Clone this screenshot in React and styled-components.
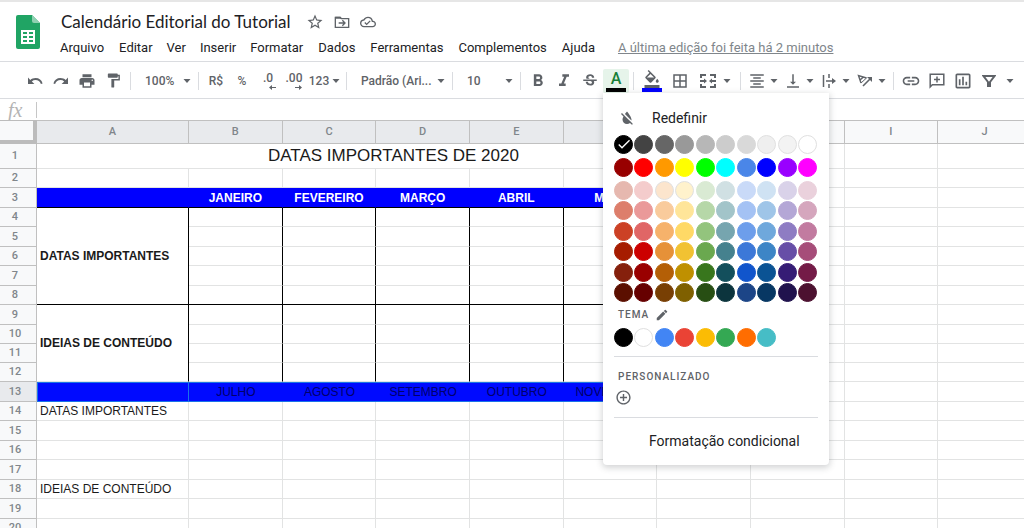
import React from 'react';
import styled, { createGlobalStyle } from 'styled-components';
import {
  MdPrint, MdFormatPaint, MdFormatBold, MdFormatItalic, MdStrikethroughS,
  MdFormatColorFill, MdBorderAll, MdFormatAlignCenter, MdVerticalAlignBottom, MdLink,
  MdOutlineInsertChart, MdFormatColorReset, MdEdit, MdAddCircleOutline,
  MdStarBorder, MdCheck,
} from 'react-icons/md';

const GlobalStyle = createGlobalStyle`
  * { box-sizing: border-box; }
  body {
    margin: 0;
    background: #fff;
    color: #3c4043;
    font-family: Roboto, "Liberation Sans", sans-serif;
  }
  button, select, input { font: inherit; color: inherit; }
`;

const Page = styled.div`
  height: 100vh;
  display: flex;
  flex-direction: column;
  overflow: hidden;
  border-top: 2px solid #e6e6e6;
`;

const Header = styled.header`
  display: flex;
  gap: 20px;
  height: 60px;
  padding: 8px 0 0 16px;
  border-bottom: 1px solid #dadce0;
`;

const Logo = styled.svg`
  width: 24px;
  height: 34px;
  margin-top: 5px;
  flex: none;
`;

const HeaderText = styled.div`
  flex: 1;
  min-width: 0;
`;

const TitleRow = styled.div`
  display: flex;
  align-items: center;
  gap: 10px;
  height: 24px;
  color: #5f6368;
`;

const DocTitle = styled.h1`
  margin: 0 5px 0 1px;
  font: 400 17px/24px Lato, sans-serif;
  color: #202124;
  white-space: nowrap;
`;

const IconButton = styled.button`
  display: flex;
  align-items: center;
  justify-content: center;
  padding: 0;
  border: 0;
  background: none;
  color: #5f6368;
  cursor: pointer;
  svg { display: block; }
`;

const Menu = styled.nav`
  display: flex;
  align-items: center;
  gap: 14px;
  height: 28px;
`;

const MenuItem = styled.button`
  padding: 0;
  border: 0;
  background: none;
  font-size: 13px;
  line-height: 20px;
  color: #202124;
  white-space: nowrap;
  cursor: pointer;
  &:first-child { margin-right: 1px; }
  &:nth-child(n + 5) { margin-right: 1px; }
`;

const LastEdit = styled.a`
  margin-left: 8px;
  font-size: 13px;
  line-height: 20px;
  color: #80868b;
  text-decoration: underline;
  white-space: nowrap;
`;

const Toolbar = styled.div`
  position: relative;
  z-index: 2;
  display: flex;
  align-items: center;
  height: 37px;
  padding: 1px 0 0 22px;
  border-bottom: 1px solid #dadce0;
  color: #5f6368;
  font-size: 12px;
`;

const Tool = styled.button`
  display: flex;
  align-items: center;
  flex: none;
  width: ${(p) => p.$width || 26}px;
  height: 24px;
  padding: 0;
  border: 0;
  border-radius: 2px;
  background: ${(p) => (p.$active ? '#e6f4ea' : 'none')};
  color: ${(p) => (p.$active ? '#188038' : '#5f6368')};
  font-weight: 500;
  cursor: pointer;
`;

const Face = styled.span`
  display: flex;
  flex-direction: column;
  align-items: center;
  justify-content: center;
  width: ${(p) => p.$width || 26}px;
  svg { display: block; }
`;

const ColorBar = styled.span`
  width: 20px;
  height: 4px;
  background: ${(p) => p.$color};
`;

const LetterA = styled.span`
  font-size: 16px;
  font-weight: 500;
  line-height: 18px;
`;

const Separator = styled.span`
  flex: none;
  width: 1px;
  height: 18px;
  margin: 0 4px;
  background: #dadce0;
`;

const CaretIcon = styled.svg`
  display: block;
  flex: none;
  width: 8px;
  height: 4px;
  margin: 0 1px;
  fill: #5f6368;
  pointer-events: none;
`;

const SelectBox = styled.label`
  display: flex;
  align-items: center;
  flex: none;
  width: ${(p) => p.$width}px;
  padding: 0 2px 0 10px;
`;

const Select = styled.select`
  flex: 1;
  min-width: 0;
  padding: 0;
  border: 0;
  appearance: none;
  background: none;
  outline: none;
  font-weight: 500;
`;

const Anchor = styled.div`
  position: relative;
`;

const Popup = styled.div`
  position: absolute;
  top: 100%;
  left: 0;
  width: 226px;
  padding: 13px 11px 12px;
  border-radius: 0 0 4px 4px;
  background: #fff;
  box-shadow: 0 2px 6px 1px rgba(60, 64, 67, 0.22);
`;

const PopupAction = styled.button`
  display: flex;
  align-items: center;
  gap: 16px;
  width: 100%;
  height: 24px;
  padding: 0 0 0 ${(p) => (p.$indent ? 35 : 4)}px;
  border: 0;
  background: none;
  font-size: 14px;
  color: #202124;
  text-align: left;
  cursor: pointer;
  svg { color: #5f6368; }
`;

const Swatches = styled.div`
  display: grid;
  grid-template-columns: repeat(10, 19px);
  justify-content: space-between;
  align-content: space-between;
  height: ${(p) => p.$height || 19}px;
  margin: ${(p) => p.$top}px 1px 0 0;
`;

const Swatch = styled.button`
  display: flex;
  align-items: center;
  justify-content: center;
  width: 19px;
  height: 19px;
  padding: 0;
  border: 1px solid ${(p) => (p.$outlined ? '#e0e0e0' : p.$color)};
  border-radius: 50%;
  background: ${(p) => p.$color};
  color: #fff;
  cursor: pointer;
`;

const PopupLabel = styled.div`
  display: flex;
  align-items: center;
  gap: 6px;
  height: 24px;
  padding-left: 4px;
  font-size: 10px;
  font-weight: 500;
  letter-spacing: 1px;
  color: #5f6368;
`;

const AddColor = styled(IconButton)`
  height: 18px;
  padding-left: 1px;
`;

const Rule = styled.hr`
  height: 1px;
  margin: ${(p) => p.$top}px 0 ${(p) => p.$bottom}px;
  border: 0;
  background: #dadce0;
`;

const FormulaBar = styled.label`
  display: flex;
  align-items: center;
  flex: none;
  height: 21px;
`;

const Fx = styled.span`
  width: 37px;
  padding-left: 8px;
  border-right: 1px solid #c6c6c6;
  font: italic 20px/16px "Liberation Serif", serif;
  color: #b4b4b4;
`;

const FormulaInput = styled.input`
  flex: 1;
  height: 20px;
  border: 0;
  outline: none;
`;

const Sheet = styled.main`
  flex: 1;
  min-height: 0;
  overflow: hidden;
`;

// a little wider than the window, the last column runs off the edge
const Table = styled.table`
  width: calc(100% + 8px);
  table-layout: fixed;
  border-collapse: separate;
  border-spacing: 0;
  font: 12px/14px "Liberation Sans", Arial, sans-serif;
  color: #1a1a1a;
`;

const Col = styled.col`
  width: ${(p) => p.$width}px;
`;

const Row = styled.tr`
  height: ${(p) => p.$height}px;
`;

const Corner = styled.td`
  padding: 0;
  border: solid #bcbcbc;
  border-width: 1px 4px 4px 0;
  background: #f8f9fa;
`;

const HeadCell = styled.th`
  padding: 0;
  border: solid #c0c0c0;
  border-width: ${(p) => (p.$column ? '1px 1px 1px 0' : '0 1px 1px 0')};
  background: ${(p) => (p.$selected ? '#e8eaed' : '#f8f9fa')};
  color: #80868b;
  font: 500 11px/14px Roboto, sans-serif;
  padding-right: ${(p) => (p.$column ? 0 : 6)}px;
`;

const Cell = styled.td`
  padding: 0 3px;
  border: solid #e2e3e3;
  border-width: 0 1px 1px 0;
  border-right-color: ${(p) => (p.$framed ? '#000' : '#e2e3e3')};
  border-bottom-color: ${(p) => (p.$closing ? '#000' : '#e2e3e3')};
  font-weight: ${(p) => (p.$bold ? 700 : 400)};
  white-space: nowrap;
  overflow: hidden;
`;

const TitleCell = styled(Cell)`
  font-size: 17px;
  line-height: 20px;
  text-align: center;
`;

const MonthCell = styled(Cell)`
  border-color: #00f;
  border-bottom-color: #000;
  background: #00f;
  color: #fff;
  font-weight: 700;
  text-align: center;
`;

const SelectedCell = styled(Cell)`
  border-color: #1a73e8;
  border-width: 1px ${(p) => (p.$current ? 1 : 0)}px 1px ${(p) => (p.$current ? 1 : 0)}px;
  background: #000aff;
  color: #00006a;
  text-align: center;
`;

const grays = ['#000000', '#434343', '#666666', '#999999', '#b7b7b7', '#cccccc', '#d9d9d9', '#efefef', '#f3f3f3', '#ffffff'];
const brights = ['#980000', '#ff0000', '#ff9900', '#ffff00', '#00ff00', '#00ffff', '#4a86e8', '#0000ff', '#9900ff', '#ff00ff'];
const shades = [
  '#e6b8af', '#f4cccc', '#fce5cd', '#fff2cc', '#d9ead3', '#d0e0e3', '#c9daf8', '#cfe2f3', '#d9d2e9', '#ead1dc',
  '#dd7e6b', '#ea9999', '#f9cb9c', '#ffe599', '#b6d7a8', '#a2c4c9', '#a4c2f4', '#9fc5e8', '#b4a7d6', '#d5a6bd',
  '#cc4125', '#e06666', '#f6b26b', '#ffd966', '#93c47d', '#76a5af', '#6d9eeb', '#6fa8dc', '#8e7cc3', '#c27ba0',
  '#a61c00', '#cc0000', '#e69138', '#f1c232', '#6aa84f', '#45818e', '#3c78d8', '#3d85c6', '#674ea7', '#a64d79',
  '#85200c', '#990000', '#b45f06', '#bf9000', '#38761d', '#134f5c', '#1155cc', '#0b5394', '#351c75', '#741b47',
  '#5b0f00', '#660000', '#783f04', '#7f6000', '#274e13', '#0c343d', '#1c4587', '#073763', '#20124d', '#4c1130',
];
const theme = ['#000000', '#ffffff', '#4285f4', '#ea4335', '#fbbc04', '#34a853', '#ff6d01', '#46bdc6'];
const outlined = ['#efefef', '#f3f3f3', '#ffffff', '#fce5cd', '#fff2cc'];

const menus = ['Arquivo', 'Editar', 'Ver', 'Inserir', 'Formatar', 'Dados', 'Ferramentas', 'Complementos', 'Ajuda'];
const columns = ['A', 'B', 'C', 'D', 'E', 'F', 'G', 'H', 'I', 'J'];
const firstHalf = ['', 'JANEIRO', 'FEVEREIRO', 'MARÇO', 'ABRIL', 'MAIO', 'JUNHO'];
const secondHalf = ['', 'JULHO', 'AGOSTO', 'SETEMBRO', 'OUTUBRO', 'NOVEMBRO', 'DEZEMBRO'];
const rows = Array.from({ length: 20 }, (_, i) => i + 1);

const Caret = () => (
  <CaretIcon viewBox="0 0 8 4" aria-hidden="true"><path d="M.5 0h7L4 4z" /></CaretIcon>
);

const Palette = ({ colors, height, top, checked }) => (
  <Swatches $height={height} $top={top}>
    {colors.map((c) => (
      <Swatch key={c} $color={c} $outlined={outlined.includes(c)} aria-label={c}>
        {c === checked && <MdCheck size={16} />}
      </Swatch>
    ))}
  </Swatches>
);

const SheetsLogo = () => (
  <Logo viewBox="0 0 24 34" aria-hidden="true">
    <path d="M2 0h14l8 8v24a2 2 0 0 1-2 2H2a2 2 0 0 1-2-2V2a2 2 0 0 1 2-2z" fill="#20a464" />
    <path d="M16 0l8 8h-6a2 2 0 0 1-2-2z" fill="#8ed1b1" />
    <path d="M5 15h14v14H5zM7 17v2h4v-2zM13 17v2h4v-2zM7 21v2h4v-2zM13 21v2h4v-2zM7 25v2h4v-2zM13 25v2h4v-2z" fill="#fff" fillRule="evenodd" />
  </Logo>
);

const UndoIcon = ({ flip }) => (
  <svg width="16" height="8" viewBox="0 0 16 8" fill="currentColor" aria-hidden="true">
    <path
      d="M8.500 1C6.500 1 4.700 1.700 3.300 2.900L1 .6V7h6.400L4.800 4.400A5.600 5.600 0 0 1 8.500 3c2.500 0 4.600 1.600 5.400 3.900l1.700-.5A7.500 7.500 0 0 0 8.500 1z"
      transform={flip ? 'translate(16 0) scale(-1 1)' : undefined}
    />
  </svg>
);

const MoveIcon = () => (
  <svg width="16" height="16" viewBox="0 0 24 24" fill="none" stroke="currentColor" strokeWidth="2" aria-hidden="true">
    <path d="M2 5h7l2 2h11v13H2z" />
    <path d="M2 4h8l2 3H2z" fill="currentColor" stroke="none" />
    <path d="M7 13.500h9M12.500 9.500l4 4-4 4" />
  </svg>
);

const CloudIcon = () => (
  <svg width="16" height="16" viewBox="0 0 24 24" fill="currentColor" aria-hidden="true">
    <path d="M19.350 10.040A7.490 7.490 0 0 0 12 4C9.110 4 6.600 5.640 5.350 8.040A5.994 5.994 0 0 0 0 14c0 3.310 2.690 6 6 6h13c2.760 0 5-2.240 5-5 0-2.640-2.050-4.780-4.650-4.960zM19 18H6c-2.210 0-4-1.790-4-4 0-2.050 1.530-3.760 3.560-3.970l1.070-.110.500-.950A5.469 5.469 0 0 1 12 6c2.620 0 4.880 1.860 5.390 4.430l.300 1.500 1.530.110A2.980 2.980 0 0 1 22 15c0 1.650-1.350 3-3 3zm-9-3.820l-2.090-2.090L6.500 13.500 10 17l6.010-6.010-1.410-1.410z" />
  </svg>
);

const Decimals = ({ text, increase }) => (
  <Face>
    <span>{text}</span>
    <svg width="16" height="5" viewBox="0 0 16 5" fill="#5f6368" aria-hidden="true">
      {increase ? <path d="M9 2h4V0l3 2.500L13 5V3H9z" /> : <path d="M16 2h-4V0L9 2.500 12 5V3h4z" />}
    </svg>
  </Face>
);

const MergeIcon = () => (
  <svg width="16" height="14" viewBox="0 0 16 14" fill="none" stroke="currentColor" strokeWidth="2" aria-hidden="true">
    <path d="M1 4V1h5M10 1h5v3M1 10v3h5M10 13h5v-3M0 7h5M16 7h-5" />
    <path d="M4 4.500L7 7 4 9.500zM12 4.500L9 7l3 2.500z" fill="currentColor" stroke="none" />
  </svg>
);

const OverflowIcon = () => (
  <svg width="14" height="14" viewBox="0 0 14 14" fill="none" stroke="currentColor" strokeWidth="1.500" aria-hidden="true">
    <path d="M1.500 1v12M7 0v4M7 10v4M4 7h7" />
    <path d="M10 4l4 3-4 3z" fill="currentColor" stroke="none" />
  </svg>
);

const RotateIcon = () => (
  <svg width="16" height="16" viewBox="0 0 16 16" fill="none" stroke="currentColor" aria-hidden="true">
    <path d="M4 10L1.500 2.500 9.500 5M3 7l3.500-3" strokeWidth="1.400" />
    <path d="M4 10l5.500-5" strokeWidth="1" />
    <path d="M6 13l7-7" strokeWidth="1.600" />
    <path d="M10 4h5v5z" fill="currentColor" stroke="none" />
  </svg>
);

const CommentIcon = () => (
  <svg width="16" height="16" viewBox="0 0 16 16" fill="none" stroke="currentColor" strokeWidth="1.500" aria-hidden="true">
    <path d="M1.200 14V1.200h13.600v10.600H3.300z" />
    <path d="M8 3.500v6M5 6.500h6" />
  </svg>
);

const FilterIcon = () => (
  <svg width="14" height="12" viewBox="0 0 14 12" fill="none" stroke="currentColor" strokeWidth="2" aria-hidden="true">
    <path d="M1.500 1h11L8 7v5H6V7z" />
  </svg>
);

const ColorMenu = () => (
  <Popup>
    <PopupAction><MdFormatColorReset size={18} />Redefinir</PopupAction>
    <Palette colors={grays} top={5} checked="#000000" />
    <Palette colors={brights} top={4} />
    <Palette colors={shades} height={122} top={4} />
    <PopupLabel>TEMA <MdEdit size={14} /></PopupLabel>
    <Palette colors={theme} top={1} />
    <Rule $top={9} $bottom={8} />
    <PopupLabel>PERSONALIZADO</PopupLabel>
    <AddColor aria-label="Adicionar cor"><MdAddCircleOutline size={17} /></AddColor>
    <Rule $top={10} $bottom={11} />
    <PopupAction $indent>Formatação condicional</PopupAction>
  </Popup>
);

const EditorToolbar = () => (
  <Toolbar>
    <Tool aria-label="Desfazer"><Face><UndoIcon /></Face></Tool>
    <Tool aria-label="Refazer"><Face><UndoIcon flip /></Face></Tool>
    <Tool aria-label="Imprimir"><Face><MdPrint size={18} /></Face></Tool>
    <Tool aria-label="Pintar formatação"><Face><MdFormatPaint size={17} /></Face></Tool>
    <Separator />
    <SelectBox $width={59}>
      <Select aria-label="Zoom"><option>100%</option></Select>
      <Caret />
    </SelectBox>
    <Separator />
    <Tool><Face>R$</Face></Tool>
    <Tool><Face>%</Face></Tool>
    <Tool><Decimals text=".0" /></Tool>
    <Tool><Decimals text=".00" increase /></Tool>
    <Tool $width={35}><Face $width={24}>123</Face><Caret /></Tool>
    <Separator />
    <SelectBox $width={97}>
      <Select aria-label="Fonte"><option>Padrão (Ari...</option></Select>
      <Caret />
    </SelectBox>
    <Separator />
    <SelectBox $width={59}>
      <Select aria-label="Tamanho da fonte"><option>10</option></Select>
      <Caret />
    </SelectBox>
    <Separator />
    <Tool aria-label="Negrito"><Face><MdFormatBold size={20} /></Face></Tool>
    <Tool aria-label="Itálico"><Face><MdFormatItalic size={20} /></Face></Tool>
    <Tool aria-label="Tachado"><Face><MdStrikethroughS size={18} /></Face></Tool>
    <Anchor>
      <Tool $active aria-label="Cor do texto">
        <Face><LetterA>A</LetterA><ColorBar $color="#000" /></Face>
      </Tool>
      <ColorMenu />
    </Anchor>
    <Separator />
    <Tool $width={28} aria-label="Cor de preenchimento">
      <Face $width={28}><MdFormatColorFill size={18} /><ColorBar $color="#00f" /></Face>
    </Tool>
    <Tool $width={28} aria-label="Bordas"><Face $width={28}><MdBorderAll size={18} /></Face></Tool>
    <Tool $width={42} aria-label="Mesclar células"><Face $width={28}><MergeIcon /></Face><Caret /></Tool>
    <Separator />
    <Tool $width={36} aria-label="Alinhamento horizontal"><Face $width={24}><MdFormatAlignCenter size={18} /></Face><Caret /></Tool>
    <Tool $width={36} aria-label="Alinhamento vertical"><Face $width={24}><MdVerticalAlignBottom size={18} /></Face><Caret /></Tool>
    <Tool $width={36} aria-label="Ajuste de texto"><Face $width={24}><OverflowIcon /></Face><Caret /></Tool>
    <Tool $width={36} aria-label="Rotação de texto"><Face $width={24}><RotateIcon /></Face><Caret /></Tool>
    <Separator />
    <Tool aria-label="Inserir link"><Face><MdLink size={20} /></Face></Tool>
    <Tool aria-label="Inserir comentário"><Face><CommentIcon /></Face></Tool>
    <Tool aria-label="Inserir gráfico"><Face><MdOutlineInsertChart size={20} /></Face></Tool>
    <Tool $width={44} aria-label="Filtro"><Face><FilterIcon /></Face><Face $width={16}><Caret /></Face></Tool>
  </Toolbar>
);

const rowHeight = (n) => {
  if (n === 1) return 25;
  return n % 2 && n !== 11 ? 20 : 19;
};

const RowCells = ({ n }) => {
  if (n === 1) {
    return (
      <>
        <TitleCell colSpan={7}>DATAS IMPORTANTES DE 2020</TitleCell>
        {columns.slice(7).map((c) => <Cell key={c} />)}
      </>
    );
  }
  if (n === 3 || n === 13) {
    const names = n === 3 ? firstHalf : secondHalf;
    return (
      <>
        {names.map((name, i) => (
          n === 3
            ? <MonthCell key={columns[i]}>{name}</MonthCell>
            : <SelectedCell key={columns[i]} $current={i === 0}>{name}</SelectedCell>
        ))}
        {columns.slice(7).map((c) => <Cell key={c} />)}
      </>
    );
  }
  const framed = n > 3 && n < 13;
  return columns.map((c, i) => {
    if (i === 0 && n === 4) return <Cell key={c} rowSpan={5} $bold $framed $closing>DATAS IMPORTANTES</Cell>;
    if (i === 0 && n === 9) return <Cell key={c} rowSpan={4} $bold $framed>IDEIAS DE CONTEÚDO</Cell>;
    if (i === 0 && framed) return null;
    return (
      <Cell key={c} $framed={framed && i < 7} $closing={n === 8 && i < 7}>
        {i === 0 && n === 14 && 'DATAS IMPORTANTES'}
        {i === 0 && n === 18 && 'IDEIAS DE CONTEÚDO'}
      </Cell>
    );
  });
};

const App = () => {
  return (
    <Page>
      <GlobalStyle />
      <Header>
        <SheetsLogo />
        <HeaderText>
          <TitleRow>
            <DocTitle>Calendário Editorial do Tutorial</DocTitle>
            <IconButton aria-label="Marcar com estrela"><MdStarBorder size={18} /></IconButton>
            <IconButton aria-label="Mover"><MoveIcon /></IconButton>
            <IconButton aria-label="Status do documento"><CloudIcon /></IconButton>
          </TitleRow>
          <Menu>
            {menus.map((m) => <MenuItem key={m}>{m}</MenuItem>)}
            <LastEdit href="#historico">A última edição foi feita há 2 minutos</LastEdit>
          </Menu>
        </HeaderText>
      </Header>
      <EditorToolbar />
      <FormulaBar>
        <Fx>fx</Fx>
        <FormulaInput aria-label="Fórmula" />
      </FormulaBar>
      <Sheet>
        <Table>
          <colgroup>
            <Col $width={37} />
            <Col $width={152} />
            {columns.slice(1).map((c) => <col key={c} />)}
          </colgroup>
          <thead>
            <Row $height={24}>
              <Corner />
              {columns.map((c, i) => <HeadCell key={c} scope="col" $column $selected={i < 7}>{c}</HeadCell>)}
            </Row>
          </thead>
          <tbody>
            {rows.map((n) => (
              <Row key={n} $height={rowHeight(n)}>
                <HeadCell scope="row" $selected={n === 13}>{n}</HeadCell>
                <RowCells n={n} />
              </Row>
            ))}
          </tbody>
        </Table>
      </Sheet>
    </Page>
  );
};

export default App;
